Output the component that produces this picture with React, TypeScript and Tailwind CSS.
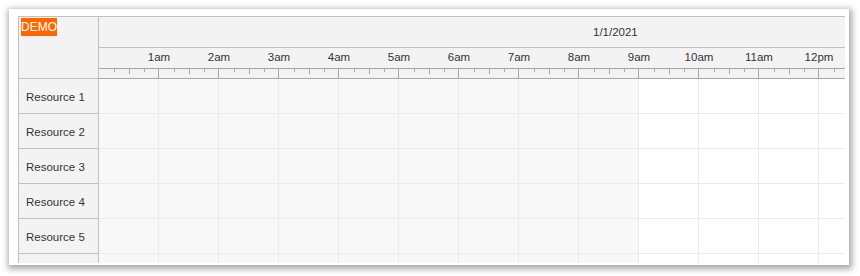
import React from "react";

const hours = Array.from({ length: 13 }, (_, i) => i);
const labels = ["1am", "2am", "3am", "4am", "5am", "6am", "7am", "8am", "9am", "10am", "11am", "12pm", ""];
const resources = ["Resource 1", "Resource 2", "Resource 3", "Resource 4", "Resource 5", ""];

export default function App() {
  return (
    <div
      className="w-[860px] h-[276px] bg-white pt-[9px] pl-[9px] text-[#333]"
      style={{ fontFamily: '"Liberation Sans", Arial, sans-serif' }}
    >
      <div className="w-[840px] h-[256px] bg-white shadow-[1px_2px_6px_2px_rgba(0,0,0,0.35)] pl-[9px] pt-[7px]">
        <div className="w-[827px] h-[247px] overflow-hidden border-l border-t border-[#c0c0c0] flex flex-col text-[11.5px]">
          {/* header */}
          <div className="flex h-[62px] shrink-0">
            <div className="w-[80px] shrink-0 h-[62px] bg-[#f3f3f3] border-r border-b border-[#c0c0c0] pl-[2px] pt-[1px]">
              <div className="w-[36px] h-[18px] bg-[#ff6600] text-white text-[12px] leading-[19px] text-center">DEMO</div>
            </div>
            <div className="flex flex-col flex-1 min-w-0 bg-[#f3f3f3]">
              <div className="h-[31px] shrink-0 border-b border-[#c0c0c0] pl-[494px] pt-[2px] flex items-center">
                <span className="whitespace-nowrap">1/1/2021</span>
              </div>
              <div className="h-[21px] shrink-0 border-b border-[#a8a8a8] flex pl-[30px] items-center">
                {labels.map((l, i) => (
                  <div key={i} className="w-[60px] shrink-0 text-center whitespace-nowrap">
                    {l}
                  </div>
                ))}
              </div>
              <div className="h-[10px] shrink-0 border-b border-[#a8a8a8] flex">
                {hours.map((h) => (
                  <div key={h} className="w-[60px] shrink-0 h-full border-r border-[#a8a8a8] flex items-start pl-[15px] gap-[14px]">
                    <div className="w-px h-[3px] bg-[#a8a8a8]" />
                    <div className="w-px h-[5px] bg-[#a8a8a8]" />
                    <div className="w-px h-[3px] bg-[#a8a8a8]" />
                  </div>
                ))}
              </div>
            </div>
          </div>
          {/* rows */}
          {resources.map((r, ri) => (
            <div key={ri} className="flex h-[35px] shrink-0">
              <div className="w-[80px] shrink-0 bg-[#f3f3f3] border-r border-b border-[#c0c0c0] pl-[7px] pt-[3px] flex items-center whitespace-nowrap">
                {r}
              </div>
              <div className="flex flex-1 min-w-0">
                {hours.map((h) => (
                  <div
                    key={h}
                    className={
                      h < 9
                        ? "w-[60px] shrink-0 border-r border-b border-[#ebebeb] bg-[#f8f8f8]"
                        : "w-[60px] shrink-0 border-r border-b border-[#ebebeb] bg-white"
                    }
                  />
                ))}
              </div>
            </div>
          ))}
        </div>
      </div>
    </div>
  );
}
